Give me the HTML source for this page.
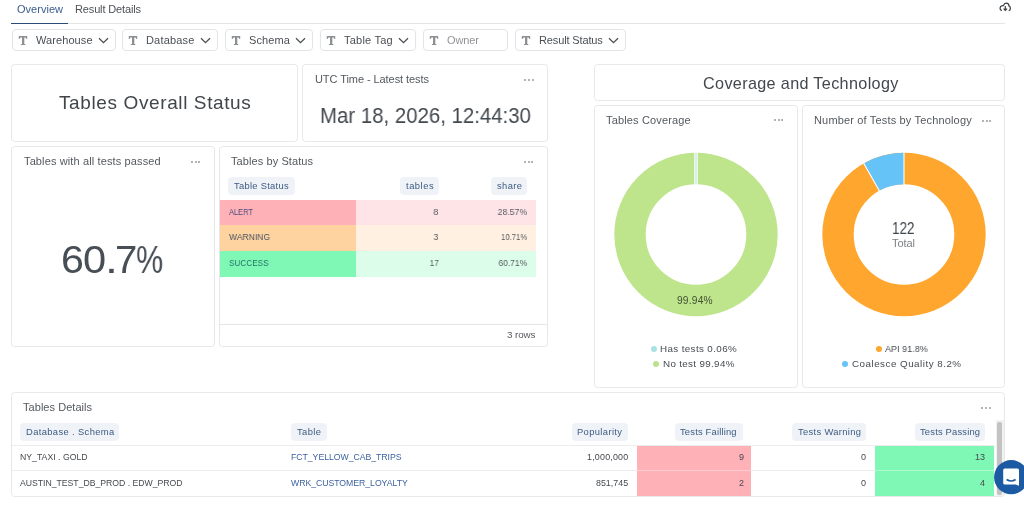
<!DOCTYPE html>
<html><head><meta charset="utf-8"><style>
html,body{margin:0;padding:0;background:#ffffff;width:1024px;height:507px;overflow:hidden;position:relative;}
body{font-family:"Liberation Sans", sans-serif;}
.abs{position:absolute;}
.t{position:absolute;white-space:nowrap;will-change:transform;}
.card{position:absolute;box-sizing:border-box;border:1px solid #e7e8e9;border-radius:3.5px;background:#fff;}
.fbox{position:absolute;box-sizing:border-box;border:1px solid #e3e4e6;border-radius:4px;background:#fff;}
</style></head><body>
<div class="t" style="top:4.09px;font-size:11px;line-height:11px;color:#3b5c8e;letter-spacing:0.022px;left:16.80px;">Overview</div>
<div class="t" style="top:4.09px;font-size:11px;line-height:11px;color:#4d5257;letter-spacing:-0.143px;left:75.00px;">Result Details</div>
<div class="abs" style="left:11px;top:23px;width:994px;height:1px;background:#e4e4e4;"></div>
<div class="abs" style="left:11px;top:22.7px;width:57px;height:1.6000000000000014px;background:#2b4a76;"></div>
<svg class="abs" style="left:984px;top:0px" width="40" height="20" viewBox="0 0 40 20"><path d="M17.4 10.4 C15.5 9.8 15.6 6.1 17.9 5.8 C18.4 5.6 19 5.5 19.4 5.6 C20 3.9 21 3.1 22.1 3.1 C23.8 3.1 24.9 4.4 25 5.9 C26.7 6.4 26.8 9.9 25.2 10.5" fill="none" stroke="#3a3f44" stroke-width="1.25" stroke-linecap="round"/><path d="M21.3 5.9 V10.3 M19.6 8.7 L21.3 10.4 L23 8.7" fill="none" stroke="#3a3f44" stroke-width="1.2"/></svg>
<div class="fbox" style="left:12px;top:29px;width:104px;height:22px;"></div>
<svg class="abs" style="left:18px;top:35px" width="11" height="11" viewBox="0 0 11 11"><path d="M0.8 1 H9.2 V3.9 H8.3 Q8.2 2.7 7.3 2.6 H6.3 V9.1 H7.3 V9.9 H2.9 V9.1 H4 V2.6 H2.7 Q1.8 2.7 1.7 3.9 H0.8 Z" fill="#8c8f93"/></svg>
<div class="t" style="top:34.69px;font-size:11px;line-height:11px;color:#4a4f54;letter-spacing:0.082px;left:35.50px;">Warehouse</div>
<svg class="abs" style="left:98.2px;top:36.8px" width="11" height="7" viewBox="0 0 11 7"><path d="M1 1.2 L5.5 5.6 L10 1.2" fill="none" stroke="#4a4f54" stroke-width="1.3"/></svg>
<div class="fbox" style="left:122px;top:29px;width:96px;height:22px;"></div>
<svg class="abs" style="left:128px;top:35px" width="11" height="11" viewBox="0 0 11 11"><path d="M0.8 1 H9.2 V3.9 H8.3 Q8.2 2.7 7.3 2.6 H6.3 V9.1 H7.3 V9.9 H2.9 V9.1 H4 V2.6 H2.7 Q1.8 2.7 1.7 3.9 H0.8 Z" fill="#8c8f93"/></svg>
<div class="t" style="top:34.69px;font-size:11px;line-height:11px;color:#4a4f54;letter-spacing:0.173px;left:145.50px;">Database</div>
<svg class="abs" style="left:200.2px;top:36.8px" width="11" height="7" viewBox="0 0 11 7"><path d="M1 1.2 L5.5 5.6 L10 1.2" fill="none" stroke="#4a4f54" stroke-width="1.3"/></svg>
<div class="fbox" style="left:225px;top:29px;width:88px;height:22px;"></div>
<svg class="abs" style="left:231px;top:35px" width="11" height="11" viewBox="0 0 11 11"><path d="M0.8 1 H9.2 V3.9 H8.3 Q8.2 2.7 7.3 2.6 H6.3 V9.1 H7.3 V9.9 H2.9 V9.1 H4 V2.6 H2.7 Q1.8 2.7 1.7 3.9 H0.8 Z" fill="#8c8f93"/></svg>
<div class="t" style="top:34.69px;font-size:11px;line-height:11px;color:#4a4f54;letter-spacing:0.089px;left:248.50px;">Schema</div>
<svg class="abs" style="left:295.2px;top:36.8px" width="11" height="7" viewBox="0 0 11 7"><path d="M1 1.2 L5.5 5.6 L10 1.2" fill="none" stroke="#4a4f54" stroke-width="1.3"/></svg>
<div class="fbox" style="left:320px;top:29px;width:96px;height:22px;"></div>
<svg class="abs" style="left:326px;top:35px" width="11" height="11" viewBox="0 0 11 11"><path d="M0.8 1 H9.2 V3.9 H8.3 Q8.2 2.7 7.3 2.6 H6.3 V9.1 H7.3 V9.9 H2.9 V9.1 H4 V2.6 H2.7 Q1.8 2.7 1.7 3.9 H0.8 Z" fill="#8c8f93"/></svg>
<div class="t" style="top:34.69px;font-size:11px;line-height:11px;color:#4a4f54;letter-spacing:0.226px;left:343.50px;">Table Tag</div>
<svg class="abs" style="left:398.2px;top:36.8px" width="11" height="7" viewBox="0 0 11 7"><path d="M1 1.2 L5.5 5.6 L10 1.2" fill="none" stroke="#4a4f54" stroke-width="1.3"/></svg>
<div class="fbox" style="left:423px;top:29px;width:85px;height:22px;"></div>
<svg class="abs" style="left:429px;top:35px" width="11" height="11" viewBox="0 0 11 11"><path d="M0.8 1 H9.2 V3.9 H8.3 Q8.2 2.7 7.3 2.6 H6.3 V9.1 H7.3 V9.9 H2.9 V9.1 H4 V2.6 H2.7 Q1.8 2.7 1.7 3.9 H0.8 Z" fill="#8c8f93"/></svg>
<div class="t" style="top:34.69px;font-size:11px;line-height:11px;color:#909397;letter-spacing:-0.150px;left:446.50px;">Owner</div>
<div class="fbox" style="left:515px;top:29px;width:111px;height:22px;"></div>
<svg class="abs" style="left:521px;top:35px" width="11" height="11" viewBox="0 0 11 11"><path d="M0.8 1 H9.2 V3.9 H8.3 Q8.2 2.7 7.3 2.6 H6.3 V9.1 H7.3 V9.9 H2.9 V9.1 H4 V2.6 H2.7 Q1.8 2.7 1.7 3.9 H0.8 Z" fill="#8c8f93"/></svg>
<div class="t" style="top:34.69px;font-size:11px;line-height:11px;color:#4a4f54;letter-spacing:-0.135px;left:538.50px;">Result Status</div>
<svg class="abs" style="left:608.2px;top:36.8px" width="11" height="7" viewBox="0 0 11 7"><path d="M1 1.2 L5.5 5.6 L10 1.2" fill="none" stroke="#4a4f54" stroke-width="1.3"/></svg>
<div class="card" style="left:11px;top:64px;width:287px;height:78px;"></div>
<div class="t" style="top:92.92px;font-size:19px;line-height:19px;color:#41464b;letter-spacing:0.614px;left:59.20px;">Tables Overall Status</div>
<div class="card" style="left:302px;top:64px;width:246px;height:78px;"></div>
<div class="t" style="top:73.69px;font-size:11px;line-height:11px;color:#54595e;letter-spacing:-0.069px;left:314.80px;">UTC Time - Latest tests</div>
<div class="abs" style="left:524.40px;top:78.50px;width:2px;height:2px;border-radius:50%;background:#979ba0"></div>
<div class="abs" style="left:528.00px;top:78.50px;width:2px;height:2px;border-radius:50%;background:#979ba0"></div>
<div class="abs" style="left:531.60px;top:78.50px;width:2px;height:2px;border-radius:50%;background:#979ba0"></div>
<div class="t" style="top:105.32px;font-size:21.6px;line-height:21.6px;color:#43484e;transform:scaleX(0.9447);left:319.50px;transform-origin:0 0;">Mar 18, 2026, 12:44:30</div>
<div class="card" style="left:11px;top:146px;width:204px;height:201px;"></div>
<div class="t" style="top:155.89px;font-size:11px;line-height:11px;color:#54595e;letter-spacing:0.126px;left:23.70px;">Tables with all tests passed</div>
<div class="abs" style="left:190.90px;top:160.70px;width:2px;height:2px;border-radius:50%;background:#979ba0"></div>
<div class="abs" style="left:194.50px;top:160.70px;width:2px;height:2px;border-radius:50%;background:#979ba0"></div>
<div class="abs" style="left:198.10px;top:160.70px;width:2px;height:2px;border-radius:50%;background:#979ba0"></div>
<div class="t" style="top:241.13px;left:61.34px;font-size:38px;line-height:38px;color:#474e56;transform:scaleX(1.0852);transform-origin:0 0;">6</div>
<div class="t" style="top:241.13px;left:83.06px;font-size:38px;line-height:38px;color:#474e56;transform:scaleX(1.0939);transform-origin:0 0;">0</div>
<div class="t" style="top:241.13px;left:105.32px;font-size:38px;line-height:38px;color:#474e56;transform:scaleX(1.2222);transform-origin:0 0;">.</div>
<div class="t" style="top:241.13px;left:114.89px;font-size:38px;line-height:38px;color:#474e56;transform:scaleX(1.0578);transform-origin:0 0;">7</div>
<div class="t" style="top:241.13px;left:136.28px;font-size:38px;line-height:38px;color:#474e56;transform:scaleX(0.8032);transform-origin:0 0;">%</div>
<div class="card" style="left:219px;top:146px;width:329px;height:201px;"></div>
<div class="t" style="top:156.09px;font-size:11px;line-height:11px;color:#54595e;letter-spacing:0.086px;left:231.30px;">Tables by Status</div>
<div class="abs" style="left:523.90px;top:160.50px;width:2px;height:2px;border-radius:50%;background:#979ba0"></div>
<div class="abs" style="left:527.50px;top:160.50px;width:2px;height:2px;border-radius:50%;background:#979ba0"></div>
<div class="abs" style="left:531.10px;top:160.50px;width:2px;height:2px;border-radius:50%;background:#979ba0"></div>
<div class="abs" style="left:228.3px;top:176.7px;width:66.69999999999999px;height:18.700000000000017px;background:#eff3f8;border-radius:4px"></div>
<div class="t" style="top:180.89px;font-size:9.4px;line-height:9.4px;color:#3d5a82;letter-spacing:0.279px;left:234.20px;">Table Status</div>
<div class="abs" style="left:400.1px;top:176.7px;width:38.599999999999966px;height:18.700000000000017px;background:#eff3f8;border-radius:4px"></div>
<div class="t" style="top:180.89px;font-size:9.4px;line-height:9.4px;color:#3d5a82;letter-spacing:0.523px;left:405.60px;">tables</div>
<div class="abs" style="left:491.3px;top:176.7px;width:35.99999999999994px;height:18.700000000000017px;background:#eff3f8;border-radius:4px"></div>
<div class="t" style="top:180.89px;font-size:9.4px;line-height:9.4px;color:#3d5a82;letter-spacing:0.397px;left:496.50px;">share</div>
<div class="abs" style="left:219.5px;top:199.5px;width:136.5px;height:25.0px;background:#ffb1b8;"></div>
<div class="abs" style="left:356px;top:199.5px;width:180px;height:25.0px;background:#ffe4e7;"></div>
<div class="t" style="top:206.87px;font-size:9.6px;line-height:9.6px;color:#4a4a7e;transform:scaleX(0.7735);left:228.80px;transform-origin:0 0;">ALERT</div>
<div class="t" style="top:207.20px;font-size:9.8px;line-height:9.8px;color:#575b60;transform:scaleX(0.9541);right:585.30px;transform-origin:100% 0;">8</div>
<div class="t" style="top:207.20px;font-size:9.8px;line-height:9.8px;color:#575b60;transform:scaleX(0.8906);right:496.70px;transform-origin:100% 0;">28.57%</div>
<div class="abs" style="left:219.5px;top:224.5px;width:136.5px;height:26.0px;background:#fed3a0;"></div>
<div class="abs" style="left:356px;top:224.5px;width:180px;height:26.0px;background:#fff0e1;"></div>
<div class="t" style="top:231.87px;font-size:9.6px;line-height:9.6px;color:#4b5361;transform:scaleX(0.8949);left:228.80px;transform-origin:0 0;">WARNING</div>
<div class="t" style="top:232.20px;font-size:9.8px;line-height:9.8px;color:#575b60;transform:scaleX(0.9174);right:585.30px;transform-origin:100% 0;">3</div>
<div class="t" style="top:232.20px;font-size:9.8px;line-height:9.8px;color:#575b60;transform:scaleX(0.7883);right:496.70px;transform-origin:100% 0;">10.71%</div>
<div class="abs" style="left:219.5px;top:250.5px;width:136.5px;height:26.0px;background:#80f8b5;"></div>
<div class="abs" style="left:356px;top:250.5px;width:180px;height:26.0px;background:#dbfde9;"></div>
<div class="t" style="top:257.87px;font-size:9.6px;line-height:9.6px;color:#1f7566;transform:scaleX(0.8554);left:228.80px;transform-origin:0 0;">SUCCESS</div>
<div class="t" style="top:258.20px;font-size:9.8px;line-height:9.8px;color:#575b60;transform:scaleX(0.8440);right:585.30px;transform-origin:100% 0;">17</div>
<div class="t" style="top:258.20px;font-size:9.8px;line-height:9.8px;color:#575b60;transform:scaleX(0.8665);right:496.70px;transform-origin:100% 0;">60.71%</div>
<div class="abs" style="left:220px;top:324px;width:327px;height:1px;background:#e6e6e6;"></div>
<div class="t" style="top:330.40px;font-size:9.8px;line-height:9.8px;color:#555a5f;letter-spacing:-0.073px;right:488.97px;">3 rows</div>
<div class="card" style="left:594px;top:64px;width:411px;height:37px;"></div>
<div class="t" style="top:74.99px;font-size:16.2px;line-height:16.2px;color:#43484d;letter-spacing:0.344px;left:702.50px;">Coverage and Technology</div>
<div class="card" style="left:594px;top:105px;width:204px;height:283px;"></div>
<div class="t" style="top:114.99px;font-size:11px;line-height:11px;color:#54595e;letter-spacing:0.147px;left:606.40px;">Tables Coverage</div>
<div class="abs" style="left:773.90px;top:119.30px;width:2px;height:2px;border-radius:50%;background:#979ba0"></div>
<div class="abs" style="left:777.50px;top:119.30px;width:2px;height:2px;border-radius:50%;background:#979ba0"></div>
<div class="abs" style="left:781.10px;top:119.30px;width:2px;height:2px;border-radius:50%;background:#979ba0"></div>
<div class="card" style="left:802px;top:105px;width:203px;height:283px;"></div>
<div class="t" style="top:114.69px;font-size:11px;line-height:11px;color:#54595e;letter-spacing:0.165px;left:814.00px;">Number of Tests by Technology</div>
<div class="abs" style="left:982.10px;top:119.50px;width:2px;height:2px;border-radius:50%;background:#979ba0"></div>
<div class="abs" style="left:985.70px;top:119.50px;width:2px;height:2px;border-radius:50%;background:#979ba0"></div>
<div class="abs" style="left:989.30px;top:119.50px;width:2px;height:2px;border-radius:50%;background:#979ba0"></div>
<svg class="abs" style="left:0;top:0" width="1024" height="507"><circle cx="696" cy="234.5" r="66.0" fill="none" stroke="#bee58b" stroke-width="31.400000000000006"/><path d="M696 151.8 V185.2" stroke="#ffffff" stroke-width="3.4"/><path d="M696 152.8 V184.2" stroke="#a9dfe6" stroke-width="0.9"/><circle cx="904" cy="234.5" r="66.0" fill="none" stroke="#ffa62f" stroke-width="31.400000000000006"/><path d="M863.769 163.392 A81.7 81.7 0 0 1 904.000 152.800 L904.000 184.200 A50.3 50.3 0 0 0 879.231 190.721 Z" fill="#66c3f8"/><path d="M904 151.8 V185.2" stroke="#ffffff" stroke-width="1.1"/><path d="M879.724 191.591 L863.277 162.522" stroke="#ffffff" stroke-width="1.1"/></svg>
<div class="t" style="top:296.17px;font-size:10.2px;line-height:10.2px;color:#425034;letter-spacing:0.201px;left:677.40px;">99.94%</div>
<div class="t" style="top:221.26px;font-size:16px;line-height:16px;color:#41464b;transform:scaleX(0.8428);left:892.20px;transform-origin:0 0;">122</div>
<div class="t" style="top:237.69px;font-size:11px;line-height:11px;color:#7d8286;letter-spacing:-0.059px;left:892.20px;">Total</div>
<div class="abs" style="left:651px;top:345.8px;width:6px;height:6px;border-radius:50%;background:#a9e2e3"></div>
<div class="t" style="top:343.50px;font-size:9.8px;line-height:9.8px;color:#464b50;letter-spacing:0.382px;left:660.00px;">Has tests 0.06%</div>
<div class="abs" style="left:653.4px;top:360.7px;width:6px;height:6px;border-radius:50%;background:#bde28d"></div>
<div class="t" style="top:358.60px;font-size:9.8px;line-height:9.8px;color:#464b50;letter-spacing:0.338px;left:662.90px;">No test 99.94%</div>
<div class="abs" style="left:876px;top:345.7px;width:6px;height:6px;border-radius:50%;background:#ffa62f"></div>
<div class="t" style="top:343.50px;font-size:9.8px;line-height:9.8px;color:#464b50;transform:scaleX(0.9243);left:885.20px;transform-origin:0 0;">API 91.8%</div>
<div class="abs" style="left:842.3px;top:361px;width:6px;height:6px;border-radius:50%;background:#66c3f8"></div>
<div class="t" style="top:358.80px;font-size:9.8px;line-height:9.8px;color:#464b50;letter-spacing:0.498px;left:851.70px;">Coalesce Quality 8.2%</div>
<div class="card" style="left:11px;top:392px;width:994px;height:105px;"></div>
<div class="t" style="top:402.29px;font-size:11px;line-height:11px;color:#54595e;letter-spacing:0.048px;left:23.10px;">Tables Details</div>
<div class="abs" style="left:981.40px;top:406.50px;width:2px;height:2px;border-radius:50%;background:#979ba0"></div>
<div class="abs" style="left:985.00px;top:406.50px;width:2px;height:2px;border-radius:50%;background:#979ba0"></div>
<div class="abs" style="left:988.60px;top:406.50px;width:2px;height:2px;border-radius:50%;background:#979ba0"></div>
<div class="abs" style="left:20.3px;top:422.7px;width:99.10000000000001px;height:18.80000000000001px;background:#eff3f8;border-radius:4px"></div>
<div class="t" style="top:426.94px;font-size:9.4px;line-height:9.4px;color:#3d5a82;letter-spacing:0.365px;left:25.60px;">Database . Schema</div>
<div class="abs" style="left:290.6px;top:422.7px;width:36.599999999999966px;height:18.80000000000001px;background:#eff3f8;border-radius:4px"></div>
<div class="t" style="top:426.94px;font-size:9.4px;line-height:9.4px;color:#3d5a82;letter-spacing:0.382px;left:296.90px;">Table</div>
<div class="abs" style="left:571.6px;top:422.7px;width:56.299999999999955px;height:18.80000000000001px;background:#eff3f8;border-radius:4px"></div>
<div class="t" style="top:426.94px;font-size:9.4px;line-height:9.4px;color:#3d5a82;letter-spacing:0.367px;left:577.20px;">Popularity</div>
<div class="abs" style="left:675.2px;top:422.7px;width:67.39999999999998px;height:18.80000000000001px;background:#eff3f8;border-radius:4px"></div>
<div class="t" style="top:426.94px;font-size:9.4px;line-height:9.4px;color:#3d5a82;letter-spacing:0.182px;left:680.30px;">Tests Failling</div>
<div class="abs" style="left:792px;top:422.7px;width:74px;height:18.80000000000001px;background:#eff3f8;border-radius:4px"></div>
<div class="t" style="top:426.94px;font-size:9.4px;line-height:9.4px;color:#3d5a82;letter-spacing:0.333px;left:797.60px;">Tests Warning</div>
<div class="abs" style="left:914.5px;top:422.7px;width:70.89999999999998px;height:18.80000000000001px;background:#eff3f8;border-radius:4px"></div>
<div class="t" style="top:426.94px;font-size:9.4px;line-height:9.4px;color:#3d5a82;letter-spacing:0.184px;left:919.70px;">Tests Passing</div>
<div class="abs" style="left:12px;top:445px;width:982px;height:1px;background:#ececec;"></div>
<div class="abs" style="left:12px;top:470px;width:982px;height:1px;background:#ececec;"></div>
<div class="abs" style="left:636.5px;top:446px;width:114.5px;height:50px;background:#ffb1b8;"></div>
<div class="abs" style="left:875px;top:446px;width:119px;height:50px;background:#80f8b5;"></div>
<div class="abs" style="left:636.5px;top:470px;width:114.5px;height:1px;background:rgba(255,255,255,0.35);"></div>
<div class="abs" style="left:875px;top:470px;width:119px;height:1px;background:rgba(255,255,255,0.35);"></div>
<div class="t" style="top:453.34px;font-size:8.7px;line-height:8.7px;color:#45494e;letter-spacing:0.014px;left:20.30px;">NY_TAXI . GOLD</div>
<div class="t" style="top:453.34px;font-size:8.7px;line-height:8.7px;color:#3d62a0;letter-spacing:-0.026px;left:291.00px;">FCT_YELLOW_CAB_TRIPS</div>
<div class="t" style="top:453.17px;font-size:8.9px;line-height:8.9px;color:#45494e;letter-spacing:0.213px;right:395.89px;">1,000,000</div>
<div class="t" style="top:453.08px;font-size:9px;line-height:9px;color:#45494e;right:280.00px;">9</div>
<div class="t" style="top:453.08px;font-size:9px;line-height:9px;color:#45494e;right:158.00px;">0</div>
<div class="t" style="top:453.08px;font-size:9px;line-height:9px;color:#45494e;right:38.60px;">13</div>
<div class="t" style="top:479.14px;font-size:8.7px;line-height:8.7px;color:#45494e;letter-spacing:-0.021px;left:20.30px;">AUSTIN_TEST_DB_PROD . EDW_PROD</div>
<div class="t" style="top:479.14px;font-size:8.7px;line-height:8.7px;color:#3d62a0;letter-spacing:-0.030px;left:291.00px;">WRK_CUSTOMER_LOYALTY</div>
<div class="t" style="top:478.97px;font-size:8.9px;line-height:8.9px;color:#45494e;right:396.10px;">851,745</div>
<div class="t" style="top:478.88px;font-size:9px;line-height:9px;color:#45494e;right:280.00px;">2</div>
<div class="t" style="top:478.88px;font-size:9px;line-height:9px;color:#45494e;right:158.00px;">0</div>
<div class="t" style="top:478.88px;font-size:9px;line-height:9px;color:#45494e;right:38.60px;">4</div>
<div class="abs" style="left:996px;top:420px;width:8px;height:76px;background:#f1f1f1;"></div>
<div class="abs" style="left:997px;top:422px;width:5px;height:73px;background:#c3c3c3;border-radius:2px;"></div>
<svg class="abs" style="left:994px;top:459.5px" width="35" height="35" viewBox="0 0 35 35"><circle cx="17.2" cy="17.2" r="17.1" fill="#1c5aa3"/><path d="M10.6 8.5 H23.5 Q25 8.5 25 10 V25.8 L21.8 24.6 H10.6 Q9.2 24.6 9.2 23.1 V10 Q9.2 8.5 10.6 8.5 Z" fill="#ffffff"/><path d="M12.6 19.5 Q17.1 22.5 21.6 19.5" fill="none" stroke="#1c5aa3" stroke-width="1.6"/></svg>
</body></html>
